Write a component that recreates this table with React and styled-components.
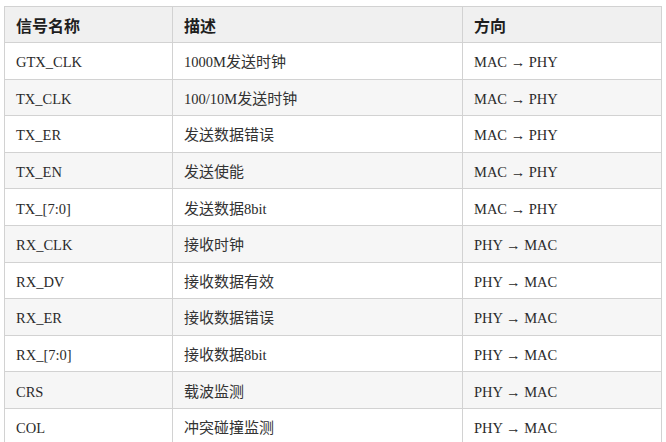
import React from "react";
import styled, { createGlobalStyle } from "styled-components";

const Global = createGlobalStyle`
  html, body { margin: 0; padding: 0; background: #fff; }
  body { font-family: "Liberation Serif", "Noto Sans CJK SC", serif; }
`;

const Wrap = styled.div`
  padding: 6px 0 0 4px;
  width: 657px;
`;

const Table = styled.table`
  border-collapse: collapse;
  width: 657px;
  table-layout: fixed;
  font-family: "Liberation Serif", "Noto Sans CJK SC", serif;
  color: #2a2a2a;
`;

const Th = styled.th`
  background: #f0f0f0;
  border: 1px solid #d2d2d2;
  height: 36px;
  box-sizing: border-box;
  padding: 0 11px;
  text-align: left;
  font-family: "Noto Sans CJK SC", sans-serif;
  font-weight: 700;
  font-size: 16px;
  line-height: 20px;
  color: #1e1e1e;
  width: ${(p) => p.$w}px;
`;

const Tr = styled.tr`
  background: ${(p) => (p.$alt ? "#f6f6f6" : "#fff")};
  height: 36.6px;
`;

const Td = styled.td`
  border: 1px solid #d2d2d2;
  padding: 3px 11px 0;
  font-size: 14.5px;
  line-height: 20px;
  vertical-align: middle;
  white-space: nowrap;
`;

const Cjk = styled.span`
  font-family: "Noto Sans CJK SC", sans-serif;
  font-size: 15px;
  line-height: 18px;
  color: #333;
`;

const rows = [
  ["GTX_CLK", ["1000M", "发送时钟"], "MAC → PHY"],
  ["TX_CLK", ["100/10M", "发送时钟"], "MAC → PHY"],
  ["TX_ER", ["", "发送数据错误"], "MAC → PHY"],
  ["TX_EN", ["", "发送使能"], "MAC → PHY"],
  ["TX_[7:0]", ["", "发送数据", "8bit"], "MAC → PHY"],
  ["RX_CLK", ["", "接收时钟"], "PHY → MAC"],
  ["RX_DV", ["", "接收数据有效"], "PHY → MAC"],
  ["RX_ER", ["", "接收数据错误"], "PHY → MAC"],
  ["RX_[7:0]", ["", "接收数据", "8bit"], "PHY → MAC"],
  ["CRS", ["", "载波监测"], "PHY → MAC"],
  ["COL", ["", "冲突碰撞监测"], "PHY → MAC"],
];

export default function App() {
  return (
    <>
      <Global />
      <Wrap>
        <Table>
          <thead>
            <tr>
              <Th $w={168}>信号名称</Th>
              <Th $w={290}>描述</Th>
              <Th $w={199}>方向</Th>
            </tr>
          </thead>
          <tbody>
            {rows.map((r, i) => (
              <Tr key={r[0]} $alt={i % 2 === 1}>
                <Td>{r[0]}</Td>
                <Td>
                  {r[1][0]}
                  <Cjk>{r[1][1]}</Cjk>
                  {r[1][2] || ""}
                </Td>
                <Td>{r[2]}</Td>
              </Tr>
            ))}
          </tbody>
        </Table>
      </Wrap>
    </>
  );
}
